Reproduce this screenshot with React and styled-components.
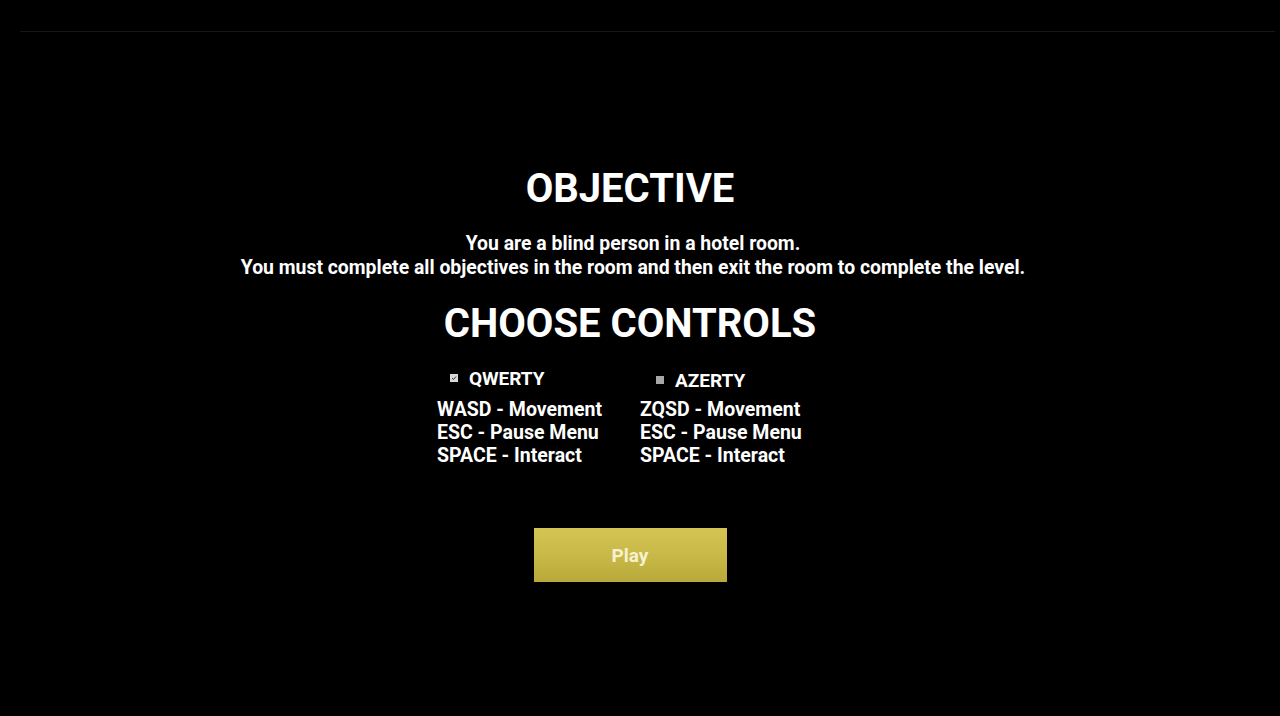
import React, { useState } from "react";
import styled, { createGlobalStyle } from "styled-components";

const GlobalStyle = createGlobalStyle`
  html, body {
    margin: 0;
    padding: 0;
    background: #000;
  }
  body {
    font-family: Roboto, "Liberation Sans", sans-serif;
    color: #fff;
  }
`;

const Page = styled.div`
  width: 1280px;
  height: 716px;
  background: #000;
  overflow: hidden;
`;

const TopBar = styled.div`
  height: 31px;
  margin: 0 5px 0 20px;
  border-bottom: 1px solid #161616;
`;

const Main = styled.main`
  display: flex;
  flex-direction: column;
  align-items: center;
  padding: 133px 20px 0 0;
`;

const Heading = styled.h1`
  margin: ${(p) => p.$margin || "0"};
  font-size: 40px;
  line-height: 48px;
  font-weight: 700;
  letter-spacing: 0;
`;

const Text = styled.p`
  margin: 19px 0 0 6px;
  font-size: 19.4px;
  line-height: 24px;
  font-weight: 700;
  text-align: center;
`;

const Controls = styled.div`
  display: grid;
  grid-template-columns: 203px 183px;
  margin-top: 18px;
`;

const Column = styled.div`
  display: flex;
  flex-direction: column;
`;

const Option = styled.label`
  display: flex;
  align-items: center;
  gap: 11px;
  height: 24px;
  margin: ${(p) => (p.$low ? "2px 0 6px 16px" : "0 0 8px 13px")};
  font-size: 19px;
  font-weight: 700;
  cursor: pointer;
`;

const Box = styled.span`
  width: 8px;
  height: 8px;
  background: ${(p) => (p.$checked ? "#d8d8d8" : "#a8a8a8")};
  display: inline-flex;
  align-items: center;
  justify-content: center;
`;

const Line = styled.div`
  font-size: 19.5px;
  line-height: 23px;
  font-weight: 700;
  white-space: nowrap;
`;

const PlayButton = styled.button`
  margin-top: 61px;
  width: 193px;
  height: 54px;
  border: none;
  background: linear-gradient(180deg, #d3c453 0%, #c6b746 55%, #b9a93b 100%);
  color: #f6f1cf;
  font-family: Roboto, "Liberation Sans", sans-serif;
  font-size: 19px;
  font-weight: 700;
  cursor: pointer;
`;

const layouts = [
  {
    name: "QWERTY",
    lines: ["WASD - Movement", "ESC - Pause Menu", "SPACE - Interact"],
  },
  {
    name: "AZERTY",
    lines: ["ZQSD - Movement", "ESC - Pause Menu", "SPACE - Interact"],
  },
];

export default function App() {
  const [layout, setLayout] = useState("QWERTY");

  return (
    <Page>
      <GlobalStyle />
      <TopBar />
      <Main>
        <Heading>OBJECTIVE</Heading>
        <Text>
          You are a blind person in a hotel room.
          <br />
          You must complete all objectives in the room and then exit the room
          to complete the level.
        </Text>
        <Heading $margin="20px 0 0">CHOOSE CONTROLS</Heading>
        <Controls>
          {layouts.map((l, i) => (
            <Column key={l.name}>
              <Option $low={i === 1} onClick={() => setLayout(l.name)}>
                <Box $checked={layout === l.name}>
                  {layout === l.name && (
                    <svg width="6" height="6" viewBox="0 0 6 6">
                      <path d="M1 3.2 L2.5 4.5 L5 1.5" stroke="#333" strokeWidth="1" fill="none" />
                    </svg>
                  )}
                </Box>
                {l.name}
              </Option>
              {l.lines.map((t) => (
                <Line key={t}>{t}</Line>
              ))}
            </Column>
          ))}
        </Controls>
        <PlayButton>Play</PlayButton>
      </Main>
    </Page>
  );
}
